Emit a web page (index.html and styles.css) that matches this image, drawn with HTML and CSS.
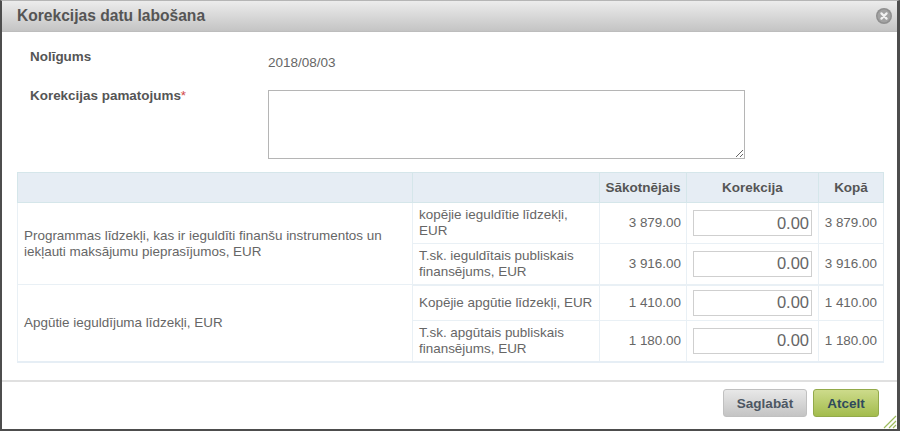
FILE: index.html
```html
<!DOCTYPE html>
<html lang="lv">
<head>
<meta charset="utf-8">
<title>Korekcijas datu labošana</title>
<link rel="stylesheet" href="styles.css">
</head>
<body>
<div class="dialog">
  <header class="head">
    <h1 class="title">Korekcijas datu labošana</h1>
    <span class="close"><svg viewBox="0 0 16 16" width="16" height="16"><circle cx="8" cy="8" r="8" fill="#8f8f8f"/><circle cx="8" cy="8" r="6.5" fill="#a2a2a2"/><path d="M5.4 5.4l5.2 5.2M10.6 5.4l-5.2 5.2" stroke="#f2f2f2" stroke-width="2.2" stroke-linecap="round"/></svg></span>
  </header>
  <main class="body">
    <div class="form-row first">
      <label class="label">Nolīgums</label>
      <div class="value">2018/08/03</div>
    </div>
    <div class="form-row second">
      <label class="label">Korekcijas pamatojums<span class="req">*</span></label>
      <textarea class="area"></textarea>
    </div>
    <table class="grid">
      <colgroup><col class="c1"><col class="c2"><col class="c3"><col class="c4"><col class="c5"></colgroup>
      <thead>
        <tr><th></th><th></th><th>Sākotnējais</th><th>Korekcija</th><th>Kopā</th></tr>
      </thead>
      <tbody>
        <tr class="r1">
          <td rowspan="2" class="main">Programmas līdzekļi, kas ir ieguldīti finanšu instrumentos un iekļauti maksājumu pieprasījumos, EUR</td>
          <td>kopējie ieguldītie līdzekļi, EUR</td><td class="num">3 879.00</td>
          <td class="inp"><input class="amount" value="0.00"></td><td class="num total">3 879.00</td>
        </tr>
        <tr class="r2 group-end">
          <td>T.sk. ieguldītais publiskais finansējums, EUR</td><td class="num">3 916.00</td>
          <td class="inp"><input class="amount" value="0.00"></td><td class="num total">3 916.00</td>
        </tr>
        <tr class="r3">
          <td rowspan="2" class="main">Apgūtie ieguldījuma līdzekļi, EUR</td>
          <td>Kopējie apgūtie līdzekļi, EUR</td><td class="num">1 410.00</td>
          <td class="inp"><input class="amount" value="0.00"></td><td class="num total">1 410.00</td>
        </tr>
        <tr class="r4">
          <td>T.sk. apgūtais publiskais finansējums, EUR</td><td class="num">1 180.00</td>
          <td class="inp"><input class="amount" value="0.00"></td><td class="num total">1 180.00</td>
        </tr>
      </tbody>
    </table>
  </main>
  <footer class="foot">
    <button class="btn save">Saglabāt</button>
    <button class="btn cancel">Atcelt</button>
    <svg class="grip" viewBox="0 0 14 14" width="14" height="14"><path d="M1 13L13 1M6 13l7-7M10 13l3-3" stroke="#9dbb5c" stroke-width="1.2"/></svg>
  </footer>
</div>
</body>
</html>
```
FILE: styles.css
```css
* { box-sizing: border-box; }
html, body { margin: 0; height: 431px; overflow: hidden; background: #fff; }
body { font-family: "Liberation Sans", Arial, sans-serif; color: #555; font-size: 13.5px; }
.dialog {
  position: relative;
  width: 900px; height: 431px;
  display: flex; flex-direction: column;
  background: #fff;
  border-left: 2px solid #4d4d4d;
  border-right: 3px solid #4d4d4d;
  border-bottom: 2px solid #4d4d4d;
  border-top: 1px solid #b5b5b5;
}
.head {
  height: 31px; flex: none;
  display: flex; align-items: center; justify-content: space-between;
  padding: 0 4px 0 15px;
  background: linear-gradient(#ececec, #c4c4c4);
  border-bottom: 1px solid #bdbdbd;
}
.title { margin: 0; font-size: 15.6px; font-weight: bold; color: #555; }
.close { display: flex; width: 16px; height: 16px; margin-right: 1px; }
.body { flex: 1; padding: 0 14px 0 15px; }
.form-row { display: flex; }
.label { flex: none; padding-left: 13px; font-weight: bold; font-size: 13.45px; color: #555; }
.first { height: 58px; padding-top: 17px; }
.first .label { width: 251px; }
.value { padding-top: 6px; font-size: 13.5px; color: #666; }
.second { height: 82px; }
.second .label { width: 238px; margin-top: -2px; }
.req { color: #d04a4a; font-weight: normal; }
.area { display: block; width: 477px; height: 69px; margin: 0 0 0 13px; border: 1px solid #b5b5b5; background: #fff; }
.grid {
  width: 866px; table-layout: fixed; border-collapse: collapse;
  border: 1px solid #e6eef5;
  border-bottom-width: 2px;
}
.c1 { width: 395px; } .c2 { width: 187px; } .c3 { width: 87px; } .c4 { width: 132px; } .c5 { width: 65px; }
th {
  height: 30px; padding: 0; background: #e6edf4;
  border: 1px solid #d5e6ea;
  font-size: 13.5px; color: #555; text-align: center;
}
td {
  padding: 0 0 0 6px; border: 1px solid #e9f0f5; font-size: 13.45px; line-height: 16px; color: #666;
}
.r1 td { height: 41px; } .r2 td { height: 41px; } .r3 td { height: 36px; } .r4 td { height: 41px; }
.group-end td { border-bottom-width: 2px; }
.num { text-align: right; padding: 0 5px 0 0; }
.total { padding-right: 6px; }
.inp { padding: 0 6px; }
.amount {
  display: block; width: 119px; height: 26px; margin: 0;
  border: 1px solid #cfcfcf; padding: 0 2px 0 0;
  font: 16.5px "Liberation Sans", Arial, sans-serif; color: #666; text-align: right; background: #fff;
}
.foot {
  height: 49px; flex: none; position: relative;
  display: flex; justify-content: flex-end; gap: 6px;
  padding: 7px 18px 0 0;
  border-top: 2px solid #e0e0e0;
}
.btn {
  height: 28px; border-radius: 3px; font: bold 13.5px "Liberation Sans", Arial, sans-serif;
  padding: 0; color: #4d5763;
}
.save { width: 84px; border: 1px solid #c0c0c0; background: linear-gradient(#e8e8e8, #c4c4c4); }
.cancel { width: 66px; border: 1px solid #93aa4a; background: linear-gradient(#cddb8b, #a3bc4d); color: #2f4a5c; }
.grip { position: absolute; right: 0; bottom: 0; }
```
